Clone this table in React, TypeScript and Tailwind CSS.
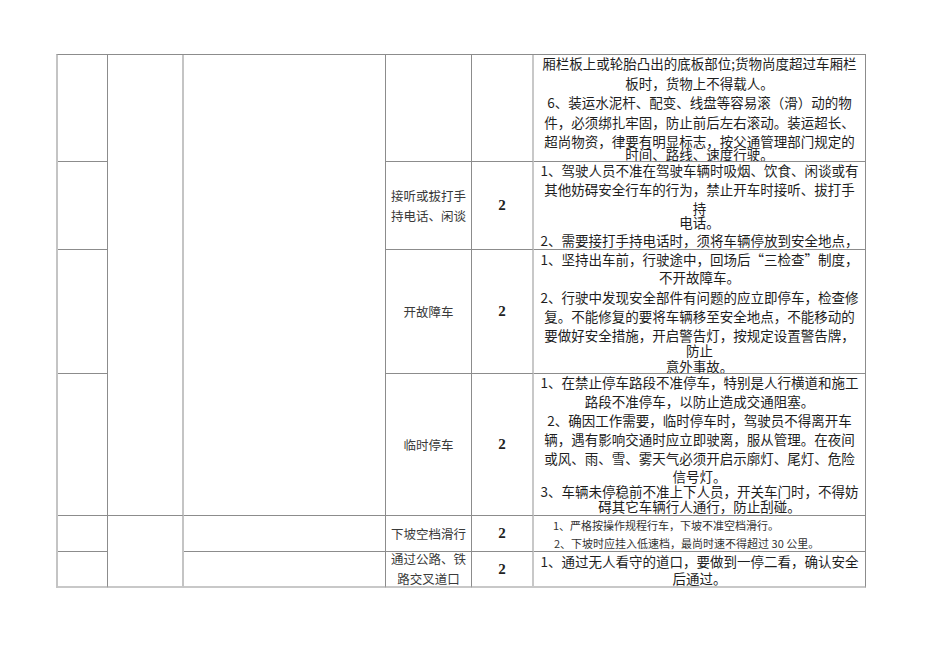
import React from "react";

type Line = { t: string; cls?: string };

const cell = "border-r border-b border-[#8c8c8c]";
const cjk = { fontFamily: '"Noto Sans CJK SC", "Noto Sans", sans-serif' };

const Rule = ({ lines, lh }: { lines: Line[]; lh: string }) => (
  <div className={`flex flex-col items-center text-[13.5px] text-[#1e1e1e] ${lh}`}>
    {lines.map((l, i) => (
      <div key={i} className={`whitespace-nowrap ${l.cls || ""}`}>
        {l.t}
      </div>
    ))}
  </div>
);

const Item = ({ children, extra = "" }: { children: React.ReactNode; extra?: string }) => (
  <div className={`${cell} ${extra} flex flex-col items-center justify-center text-[12.5px] leading-[20px] text-[#3a3a3a]`}>
    {children}
  </div>
);

const Score = ({ extra = "" }: { extra?: string }) => (
  <div className={`${cell} border-r-2 border-r-[#c8c8c8] ${extra} flex items-center justify-center`}>
    <span className="text-[15px] font-semibold text-[#222]" style={{ fontFamily: '"Liberation Serif", serif' }}>
      2
    </span>
  </div>
);

const App = () => {
  return (
    <div className="min-h-screen bg-white pt-[54px] pl-[56px]" style={cjk}>
      <div
        className="grid border-t border-l-2 border-t-[#8c8c8c] border-l-[#c4c4c4]"
        style={{ gridTemplateColumns: "50px 76px 202px 86px 62px 332px", gridTemplateRows: "107px 88px 124px 142px 36px 36px", width: 810 }}
      >
        {/* row 1 */}
        <div className={cell} />
        <div className={`${cell} row-span-4 border-r-2 border-r-[#c4c4c4]`} />
        <div className={`${cell} row-span-4`} />
        <div className={cell} />
        <div className={`${cell} border-r-2 border-r-[#c8c8c8]`} />
        <div className={`${cell} overflow-hidden`}>
          <Rule
            lh="leading-[19.5px]"
            lines={[
              { t: "厢栏板上或轮胎凸出的底板部位;货物尚度超过车厢栏", cls: "-mt-[1px]" },
              { t: "板时，货物上不得载人。" },
              { t: "6、装运水泥杆、配变、线盘等容易滚（滑）动的物" },
              { t: "件，必须绑扎牢固，防止前后左右滚动。装运超长、" },
              { t: "超尚物资，律要有明显标志，按父通管理部门规定的" },
              { t: "时间、路线、速度行驶。", cls: "-mt-[7px]" },
            ]}
          />
        </div>

        {/* row 2 */}
        <div className={cell} />
        <Item>
          <div>接听或拔打手</div>
          <div>持电话、闲谈</div>
        </Item>
        <Score />
        <div className={`${cell} overflow-hidden`}>
          <Rule
            lh="leading-[19px]"
            lines={[
              { t: "1、驾驶人员不准在驾驶车辆时吸烟、饮食、闲谈或有", cls: "-mt-[1px]" },
              { t: "其他妨碍安全行车的行为，禁止开车时接听、拔打手" },
              { t: "持" },
              { t: "电话。", cls: "-mt-[5px]" },
              { t: "2、需要接打手持电话时，须将车辆停放到安全地点，", cls: "-mt-[1px]" },
            ]}
          />
        </div>

        {/* row 3 */}
        <div className={cell} />
        <Item>开故障车</Item>
        <Score />
        <div className={`${cell} overflow-hidden`}>
          <Rule
            lh="leading-[19px]"
            lines={[
              { t: "1、坚持出车前，行驶途中，回场后“三检查”制度，" },
              { t: "不开故障车。", cls: "-mt-[1px]" },
              { t: "2、行驶中发现安全部件有问题的应立即停车，检查修", cls: "mt-[1px]" },
              { t: "复。不能修复的要将车辆移至安全地点，不能移动的" },
              { t: "要做好安全措施，开启警告灯，按规定设置警告牌，" },
              { t: "防止", cls: "-mt-[4px]" },
              { t: "意外事故。", cls: "-mt-[3px]" },
            ]}
          />
        </div>

        {/* row 4 */}
        <div className={cell} />
        <Item>临时停车</Item>
        <Score />
        <div className={`${cell} overflow-hidden`}>
          <Rule
            lh="leading-[19px]"
            lines={[
              { t: "1、在禁止停车路段不准停车，特别是人行横道和施工", cls: "-mt-[1px]" },
              { t: "路段不准停车，以防止造成交通阻塞。" },
              { t: "2、确因工作需要，临时停车时，驾驶员不得离开车" },
              { t: "辆，遇有影响交通时应立即驶离，服从管理。在夜间" },
              { t: "或风、雨、雪、雾天气必须开启示廓灯、尾灯、危险" },
              { t: "信号灯。", cls: "-mt-[1px]" },
              { t: "3、车辆未停稳前不准上下人员，开关车门时，不得妨", cls: "-mt-[4px]" },
              { t: "碍其它车辆行人通行，防止刮碰。", cls: "-mt-[4px]" },
            ]}
          />
        </div>

        {/* row 5 */}
        <div className={cell} />
        <div className={`${cell} row-span-2 border-r-2 border-r-[#c4c4c4] border-b-2 border-b-[#c8c8c8]`} />
        <div className={cell} />
        <Item>下坡空档滑行</Item>
        <Score />
        <div className={`${cell} overflow-hidden pl-[19px] text-[11px] leading-[18px] text-[#333]`}>
          <div className="whitespace-nowrap">1、严格按操作规程行车，下坡不准空档滑行。</div>
          <div className="whitespace-nowrap pl-[1px]">2、下坡时应挂入低速档，最尚时速不得超过 30 公里。</div>
        </div>

        {/* row 6 */}
        <div className={`${cell} border-b-2 border-b-[#c8c8c8]`} />
        <div className={`${cell} border-b-2 border-b-[#c8c8c8]`} />
        <Item extra="border-b-2 border-b-[#c8c8c8] leading-[18px]">
          <div>通过公路、铁</div>
          <div>路交叉道口</div>
        </Item>
        <Score extra="border-b-2 border-b-[#c8c8c8]" />
        <div className={`${cell} border-b-2 border-b-[#c8c8c8] overflow-hidden pt-[1px]`}>
          <Rule
            lh="leading-[17px]"
            lines={[
              { t: "1、通过无人看守的道口，要做到一停二看，确认安全" },
              { t: "后通过。" },
            ]}
          />
        </div>
      </div>
    </div>
  );
};

export default App;
